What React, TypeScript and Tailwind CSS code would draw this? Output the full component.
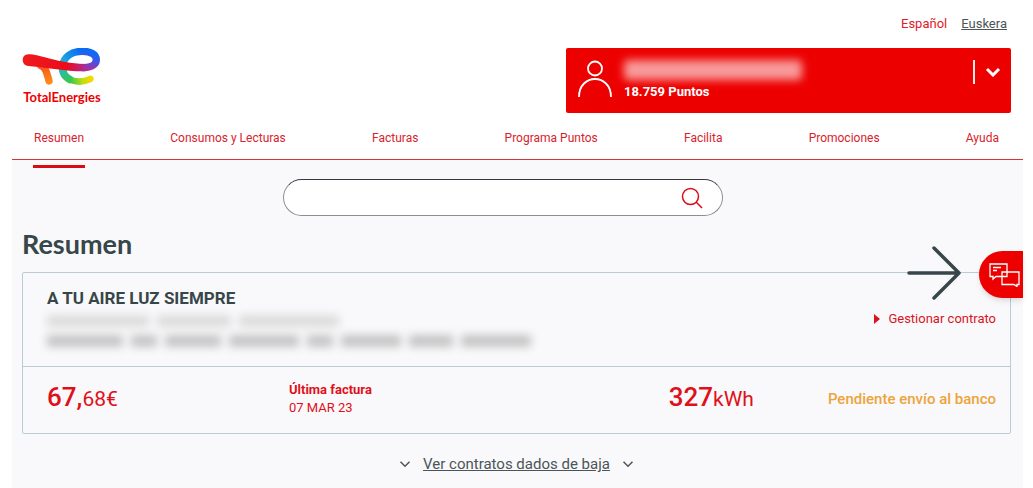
import type { ReactNode } from 'react'

const NAV_ITEMS = [
  'Resumen',
  'Consumos y Lecturas',
  'Facturas',
  'Programa Puntos',
  'Facilita',
  'Promociones',
  'Ayuda',
]

function Logo() {
  return (
    <a href="#" className="block w-20 text-[#ed0000]">
      <svg viewBox="67 53 240 120" className="block w-20 h-10" fill="none" aria-hidden="true">
        <defs>
          <linearGradient id="bottom" gradientUnits="userSpaceOnUse" x1="280" y1="146" x2="212" y2="150">
            <stop stopColor="#ffd500" />
            <stop offset=".45" stopColor="#c4dc10" />
            <stop offset="1" stopColor="#37c84e" />
          </linearGradient>
          <linearGradient id="left" gradientUnits="userSpaceOnUse" x1="212" y1="150" x2="190" y2="104">
            <stop stopColor="#37c84e" />
            <stop offset="1" stopColor="#21b5d8" />
          </linearGradient>
          <linearGradient id="top" gradientUnits="userSpaceOnUse" x1="190" y1="106" x2="242" y2="62">
            <stop stopColor="#21b5d8" />
            <stop offset="1" stopColor="#0a6bf5" />
          </linearGradient>
          <linearGradient id="right" gradientUnits="userSpaceOnUse" x1="275" y1="65" x2="258" y2="112">
            <stop stopColor="#0a6bf5" />
            <stop offset=".5" stopColor="#4c4fe0" />
            <stop offset="1" stopColor="#a5309f" />
          </linearGradient>
          <linearGradient id="bar" gradientUnits="userSpaceOnUse" x1="70" y1="90" x2="260" y2="112">
            <stop stopColor="#ee1c1c" />
            <stop offset=".7" stopColor="#ed0a1c" />
            <stop offset="1" stopColor="#a5309f" />
          </linearGradient>
          <linearGradient id="stem" gradientUnits="userSpaceOnUse" x1="135" y1="100" x2="148" y2="155">
            <stop stopColor="#f5501a" />
            <stop offset="1" stopColor="#ff8a1a" />
          </linearGradient>
        </defs>
        <path d="M272 146C250 156 230 155 214 149" stroke="url(#bottom)" strokeWidth="20" strokeLinecap="round" />
        <path d="M216 150C196 142 187 126 188 106" stroke="url(#left)" strokeWidth="22" />
        <path d="M188 108C191 80 215 63 248 63" stroke="url(#top)" strokeWidth="22" />
        <path d="M246 63C275 62 290 74 290 88C290 104 272 112 246 112" stroke="url(#right)" strokeWidth="22" />
        <path d="M124 106C138 112 141 126 148 152" stroke="url(#stem)" strokeWidth="22" strokeLinecap="round" strokeLinejoin="round" />
        <path d="M86 72C120 72 170 98 256 101V123C200 124 150 112 86 107C63 105 64 72 86 72Z" fill="url(#bar)" />
      </svg>
      <span className="block text-center font-[Lato,sans-serif] text-[13px] leading-[18px] font-bold">TotalEnergies</span>
    </a>
  )
}

function ChevronDown({ className }: { className: string }) {
  return (
    <svg viewBox="0 0 16 10" className={className} fill="none" stroke="currentColor" aria-hidden="true">
      <path d="M2 2L8 8L14 2" />
    </svg>
  )
}

function UserPanel() {
  return (
    <button
      type="button"
      aria-label="Mi cuenta"
      className="flex w-[45%] h-[65px] items-start rounded-xs bg-[#ed0000] pt-3 pl-3 pr-2.5 text-white"
    >
      <svg viewBox="0 0 36 38" className="h-[38px] w-9" fill="none" stroke="currentColor" strokeWidth="1.8" aria-hidden="true">
        <circle cx="17" cy="8.500" r="7" />
        <path d="M1 37C1 13 33 13 33 37" />
      </svg>
      <span className="flex flex-col items-start pl-2.5">
        <span className="h-5 w-[178px] rounded-sm bg-white/60 blur-[4px]" />
        <span className="pt-1 text-[13px] leading-4 font-bold">18.759 Puntos</span>
      </span>
      <span className="ml-auto flex h-6 items-center border-l-2 border-white/90 pl-2.5">
        <ChevronDown className="h-2.5 w-4 stroke-3" />
      </span>
    </button>
  )
}

function Redacted({ widths, className }: { widths: number[]; className: string }) {
  return (
    <div className="flex gap-2 blur-[4px]" aria-hidden="true">
      {widths.map((width, i) => (
        <span key={i} className={className} style={{ width }} />
      ))}
    </div>
  )
}

function Amount({ value, children }: { value: string; children: ReactNode }) {
  return (
    <p className="text-[21px] leading-9 whitespace-nowrap">
      <span className="text-[26px] font-medium">{value}</span>
      {children}
    </p>
  )
}

function ContractCard() {
  return (
    <section className="relative rounded-xs border border-[#b9cdd3]">
      <div className="flex h-[94px] items-start justify-between border-b border-[#b9cdd3] pt-3 pr-3.5 pl-6">
        <div>
          <h2 className="text-[17px] leading-[26px] font-bold text-[#374649]">A TU AIRE LUZ SIEMPRE</h2>
          <div className="flex flex-col gap-2 pt-1">
            <Redacted widths={[102, 74, 100]} className="h-3 bg-neutral-300/80" />
            <Redacted widths={[76, 26, 56, 70, 26, 60, 44, 70]} className="h-3 bg-neutral-400/60" />
          </div>
        </div>
        <a href="#" className="mt-[22px] flex items-center gap-2 text-[13px] leading-6 text-[#d9141e]">
          <svg viewBox="0 0 6 10" className="h-2.5 w-1.5" fill="currentColor" aria-hidden="true">
            <path d="M0 0L6 5L0 10Z" />
          </svg>
          Gestionar contrato
        </a>
      </div>
      <div className="grid h-[66px] grid-cols-[242px_1fr_auto] items-start pt-3 pr-3.5 pl-6 text-[#e0101a]">
        <Amount value="67,">68€</Amount>
        <div className="pt-0.5 text-[13px] leading-[18px]">
          <p className="font-bold">Última factura</p>
          <p>07 MAR 23</p>
        </div>
        <div className="flex gap-[74px]">
          <Amount value="327">kWh</Amount>
          <p className="pt-0.5 text-[15px] leading-9 font-medium text-[#eda43a]">Pendiente envío al banco</p>
        </div>
      </div>
      <svg
        viewBox="0 0 54 54"
        className="absolute -top-[27px] right-[49px] size-[54px]"
        fill="none"
        stroke="#374649"
        strokeWidth="3.500"
        strokeLinecap="round"
        strokeLinejoin="round"
        aria-hidden="true"
      >
        <path d="M2 27H52M27 2L52 27L27 52" />
      </svg>
      <button
        type="button"
        aria-label="Chat"
        className="absolute -top-[22px] -right-[13px] flex h-[47px] w-11 items-center rounded-l-full bg-[#ed0000] pl-2.5 text-white shadow-md"
      >
        <svg viewBox="0 0 32 24" className="h-6 w-8 shrink-0" fill="none" stroke="currentColor" strokeWidth="1.300" aria-hidden="true">
          <path d="M12.500 13.500H7L4 16V13.500H1V1H18V13.500H12.500" />
          <path d="M4 4.500H12M4 7.500H8" />
          <path d="M13 9H30V21.500H28V23.500L25 21.500H13Z" />
        </svg>
      </button>
    </section>
  )
}

export default function App() {
  return (
    <div className="bg-white pr-2.5 pl-3 font-[Roboto,sans-serif]">
      <header>
        <div className="flex justify-end gap-3.5 pt-3.5 pr-4 text-[13px] leading-5">
          <a href="#" className="text-[#e0202c]">Español</a>
          <a href="#" className="text-[#4b5558] underline">Euskera</a>
        </div>
        <div className="flex items-start justify-between pt-3.5 pr-3 pl-2.5">
          <Logo />
          <UserPanel />
        </div>
        <nav className="flex h-[47px] items-start justify-between border-b border-b-[#d8323a] pt-3.5 pr-6 pl-[22px] text-[12px] leading-[22px] text-[#d8232d]">
          {NAV_ITEMS.map((item, i) => (
            <a key={item} href="#" className="relative whitespace-nowrap">
              {item}
              {i === 0 && <span className="absolute top-[38px] -inset-x-px h-[3px] bg-[#dc0a14]" />}
            </a>
          ))}
        </nav>
      </header>

      <main className="min-h-[328px] bg-[#f9f9fb] pt-[19px] pr-3 pb-3 pl-2.5">
        <div className="pr-7">
          <form className="relative mx-auto w-[440px] max-w-full" role="search">
            <input
              type="text"
              aria-label="Buscar"
              className="block h-[37px] w-full rounded-full border border-[#8a8f92] border-t-[#33383a] bg-white pr-14 pl-5 text-sm outline-none"
            />
            <button type="button" aria-label="Buscar" className="absolute top-2 right-5 text-[#dc0a14]">
              <svg viewBox="0 0 22 22" className="size-[22px]" fill="none" stroke="currentColor" strokeWidth="1.500" aria-hidden="true">
                <circle cx="9.500" cy="9.500" r="8" />
                <path d="M15.300 15.300L21 21" />
              </svg>
            </button>
          </form>
        </div>

        <h1 className="pt-3 pb-3 font-[Lato,sans-serif] text-[27px] leading-8 font-bold text-[#374649]">Resumen</h1>

        <ContractCard />

        <div className="flex items-center justify-center gap-3 pt-[18px] text-[#4b5558]">
          <ChevronDown className="h-2 w-3 stroke-2" />
          <a href="#" className="text-[15px] leading-6 underline">Ver contratos dados de baja</a>
          <ChevronDown className="h-2 w-3 stroke-2" />
        </div>
      </main>
    </div>
  )
}
